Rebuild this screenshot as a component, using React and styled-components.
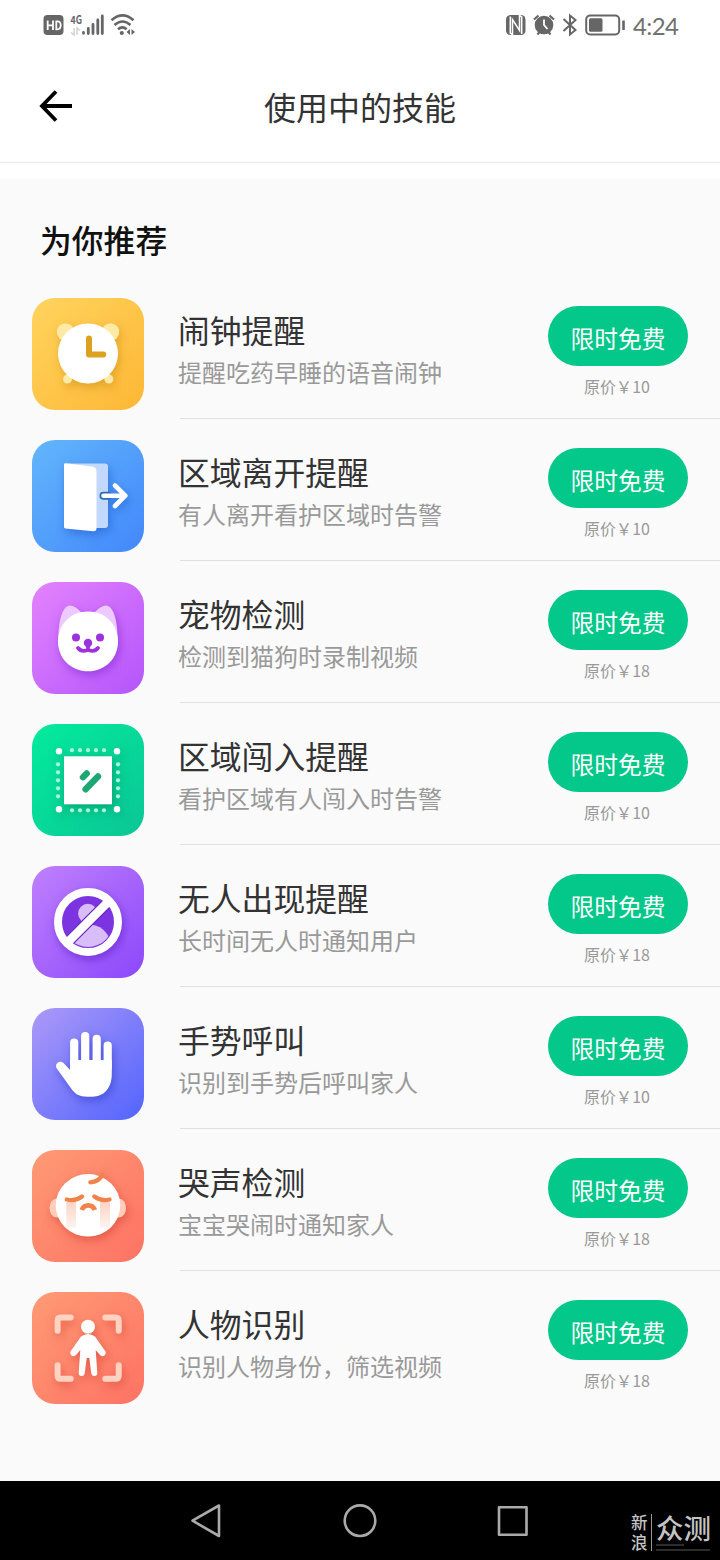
import React from "react";
import styled, { createGlobalStyle } from "styled-components";

const skills = [
  { icon: "clock", name: "闹钟提醒", text: "提醒吃药早睡的语音闹钟", price: 10, from: "#ffd45e", to: "#fdb735", shadow: "#c98a10" },
  { icon: "door", name: "区域离开提醒", text: "有人离开看护区域时告警", price: 10, from: "#63b6fc", to: "#4287fb", shadow: "#1c56c8" },
  { icon: "pet", name: "宠物检测", text: "检测到猫狗时录制视频", price: 18, from: "#e383fd", to: "#b455fc", shadow: "#7d22cc" },
  { icon: "area", name: "区域闯入提醒", text: "看护区域有人闯入时告警", price: 10, from: "#03eb9c", to: "#0bc696", shadow: "#047f5e" },
  { icon: "nobody", name: "无人出现提醒", text: "长时间无人时通知用户", price: 18, from: "#c080fd", to: "#8c48fb", shadow: "#5518c0" },
  { icon: "hand", name: "手势呼叫", text: "识别到手势后呼叫家人", price: 10, from: "#ac99f8", to: "#5264fd", shadow: "#2a36c4" },
  { icon: "baby", name: "哭声检测", text: "宝宝哭闹时通知家人", price: 18, from: "#fe9a74", to: "#fe7364", shadow: "#cf3d30" },
  { icon: "person", name: "人物识别", text: "识别人物身份，筛选视频", price: 18, from: "#fe9a74", to: "#fe7364", shadow: "#cf3d30" },
];

const ticks = [40, 48, 56, 64, 72];

const drawings = {
  clock: (
    <>
      <g fill="#ffe9a6">
        <circle cx="33.5" cy="34" r="8.7" />
        <circle cx="78.5" cy="34" r="8.7" />
        <circle cx="35.5" cy="81" r="4.5" />
        <circle cx="76.8" cy="81" r="4.5" />
      </g>
      <circle cx="56" cy="55.5" r="30" fill="#fff" />
      <path d="M57 40.5V56.5H71.2" stroke="#dba11f" strokeWidth="6" />
    </>
  ),
  door: (
    <>
      <rect x="33" y="23.5" width="43" height="64.5" rx="3" fill="#c3d8fd" />
      <path d="M32 24.5Q32 23 33.5 23.2L60 26.4Q64.5 27 64.5 31.5V88Q64.5 91.6 61 91.2L33.5 88.6Q32 88.4 32 87Z" fill="#fff" />
      <path d="M76 55.7H71.5" stroke="#2c69bd" strokeWidth="8" />
      <path d="M71.5 55.7H92M83 45.5L93.3 55.7L83 66" stroke="#fff" strokeWidth="4.6" />
    </>
  ),
  pet: (
    <>
      <path d="M26.5 58C26 38 31 23.5 38 23.5Q43 23.5 49 30L63 30Q69 23.5 74 23.5C81 23.5 86 38 85.5 58Z" fill="#ecc9ff" />
      <path d="M56 29.5C73.5 29.5 86 42.5 86 59.5C86 76.5 73 89.3 56 89.3S26 76.5 26 59.5C26 42.5 38.5 29.5 56 29.5Z" fill="#fff" />
      <g fill="#9b32dc">
        <circle cx="44" cy="55.5" r="4" />
        <circle cx="68" cy="55.5" r="4" />
        <circle cx="56" cy="61" r="4.2" />
      </g>
      <path d="M46 66Q49.5 70.5 56 67.8Q62.5 70.5 66 66M56 62V67.5" stroke="#9b32dc" strokeWidth="3.8" />
    </>
  ),
  area: (
    <>
      <rect x="32" y="32.3" width="48" height="48" fill="#fff" />
      <g fill="#fff">
        <circle cx="27" cy="27.3" r="3.2" />
        <circle cx="85" cy="27.3" r="3.2" />
        <circle cx="27" cy="85.3" r="3.2" />
        <circle cx="85" cy="85.3" r="3.2" />
      </g>
      <g fill="#a6f7d8">
        {ticks.map((t) => (
          <g key={t}>
            <circle cx={t} cy="26.2" r="2.1" />
            <circle cx={t} cy="86.3" r="2.1" />
            <circle cx="26" cy={t + 0.3} r="2.1" />
            <circle cx="86" cy={t + 0.3} r="2.1" />
          </g>
        ))}
      </g>
      <path d="M51 53.2L54.7 49.5M53.6 65.3L66 52.5" stroke="#1da873" strokeWidth="6.4" />
    </>
  ),
  nobody: (
    <>
      <clipPath id="ring">
        <circle cx="56" cy="56" r="25" />
      </clipPath>
      <circle cx="56" cy="56" r="27" fill="#7b34e0" />
      <g clipPath="url(#ring)">
        <circle cx="55.8" cy="47.5" r="9.7" fill="#d9bdf8" />
        <ellipse cx="56" cy="76" rx="21.5" ry="17.5" fill="#d9bdf8" />
        <path d="M34 78L78 34" stroke="#6a28c8" strokeWidth="11" />
      </g>
      <circle cx="56" cy="56" r="30" stroke="#fff" strokeWidth="8" />
      <path d="M36.5 75.5L75.5 36.5" stroke="#fff" strokeWidth="8.8" />
    </>
  ),
  hand: (
    <>
      <path d="M42.2 34.5V60M53.2 28V60M64.7 30.8V60M75.7 37.5V60" stroke="#fff" strokeWidth="8.2" />
      <path d="M38.1 52H79.8V66C79.8 80 72 88.7 60.5 88.7H55C47.5 88.7 43 86 39.5 81L24.8 60.5C22 56 27.5 51.5 31.5 55L38.1 62Z" fill="#fff" />
    </>
  ),
  baby: (
    <>
      <defs>
        <linearGradient id="tear" x1="0" y1="0" x2="0" y2="1">
          <stop offset="0" stopColor="#fbd3c4" />
          <stop offset="1" stopColor="#fbd3c4" stopOpacity="0.25" />
        </linearGradient>
      </defs>
      <ellipse cx="24.5" cy="58" rx="7" ry="9.5" fill="#ffcdb9" />
      <ellipse cx="87" cy="58" rx="7" ry="9.5" fill="#ffcdb9" />
      <ellipse cx="56" cy="55.3" rx="32.3" ry="31.3" fill="#fff" />
      <path d="M34.3 52H44V78H34.3ZM68 52H78V78H68Z" fill="url(#tear)" />
      <g stroke="#f0824a" strokeWidth="4.2">
        <path d="M70.5 24.5Q67 32 58.3 32.3M34.8 49.5Q43.5 51.5 50 46.5M62.3 46.5Q69 51.5 77.5 49.5" />
        <path d="M49.8 60Q51.5 55.3 56.3 55.3T62.8 60" strokeWidth="4.8" strokeLinecap="butt" />
      </g>
    </>
  ),
  person: (
    <>
      <path
        d="M25.6 38.7V28.6Q25.6 25.6 28.6 25.6H38.7M73.3 25.6H83.7Q86.7 25.6 86.7 28.6V38.7M86.7 73.3V83.7Q86.7 86.7 83.7 86.7H73.3M38.7 86.7H28.6Q25.6 86.7 25.6 83.7V73.3"
        stroke="#ffd3c1"
        strokeWidth="6"
      />
      <g fill="#fff">
        <circle cx="56" cy="34.8" r="7" />
        <path d="M49 44.5Q56 39.5 63 44.5L73.5 59.5Q74.5 62.8 71.5 64Q69.5 64.5 68 63L63.7 58L65.3 81Q65.3 84 62.5 84T59.3 81.5L57.3 66H54.7L52.7 81.5Q52.3 84 49.5 84T46.7 81L48.3 58L44 63Q42.5 64.5 40.5 64Q37.5 62.8 38.5 59.5Z" />
      </g>
    </>
  ),
};

const App = () => {
  return (
    <Screen>
      <GlobalStyle />
      <StatusBar>
        <svg width="100" height="50" viewBox="40 0 100 50" fill="none" stroke="#666">
          <rect x="43.5" y="15" width="20" height="20" rx="4" fill="#666" stroke="none" />
          <path d="M47.7 20.5V30M53 20.5V30M47.7 25.3H53M56.3 21.3V29.3H57.5Q60.7 29.3 60.7 25.3T57.5 21.3Z" stroke="#fff" strokeWidth="1.8" />
          <text x="70.5" y="23.5" fontSize="11" fontWeight="700" fill="#666" stroke="none" textLength="11.5" lengthAdjust="spacingAndGlyphs">
            4G
          </text>
          <path d="M74 28V35L71 32.5M77 35V28L80 30.5" stroke="#d0d0d0" strokeWidth="1.4" />
          <path d="M83.5 32.5V33.3M88.3 28.5V33.5M93 24.5V33.5M97.8 20V33.5M102.3 16V33.5" strokeWidth="2.8" strokeLinecap="round" />
          <path d="M111.5 20.2Q122.5 10.5 133.5 20.2M114.5 25Q122.5 18 130.5 25M118 29.3Q122.3 25.5 126.7 29.3" strokeWidth="2.6" />
          <circle cx="121.8" cy="33" r="2.1" fill="#666" stroke="none" />
          <path d="M130 29V35L126.5 32ZM131.5 35V29L135 32Z" fill="#666" stroke="none" />
        </svg>
        <StatusSide>
          <svg width="125" height="50" viewBox="503 0 125 50" fill="none" stroke="#666">
            <rect x="506" y="15" width="19.5" height="20" rx="4.5" fill="#666" stroke="none" />
            <path d="M510.3 16.5V33L512.5 34.5V19.5L519.5 30.5V15.5L521.7 17V34" stroke="#fff" strokeWidth="1.5" />
            <circle cx="544" cy="25" r="9.3" fill="#666" stroke="none" />
            <path d="M544 19.5V25L547.5 29" stroke="#fff" strokeWidth="1.8" />
            <path d="M534 19.5L538.5 15.5M554 19.5L549.5 15.5M537.5 34.5L540 31.5M550.5 34.5L548 31.5" strokeWidth="2.2" />
            <path d="M563.5 19L575.5 30L570 34.5V15.5L575.5 20L563.5 31" strokeWidth="2" />
            <rect x="586.2" y="15.5" width="33" height="19" rx="4" strokeWidth="2" />
            <rect x="589" y="18.3" width="13.5" height="13.5" rx="1.5" fill="#666" stroke="none" />
            <path d="M623.5 20.5V30" strokeWidth="2.6" />
          </svg>
          <Time>4:24</Time>
        </StatusSide>
      </StatusBar>

      <Header>
        <BackButton aria-label="返回">
          <svg width="34" height="32" viewBox="0 0 34 32" fill="none" stroke="#000" strokeWidth="3.8">
            <path d="M33 16H4M17 1.5L3 16L17 30.5" />
          </svg>
        </BackButton>
        <Title>使用中的技能</Title>
      </Header>

      <Content>
        <SectionTitle>为你推荐</SectionTitle>
        {skills.map((skill) => (
          <SkillRow key={skill.name}>
            <SkillIcon $from={skill.from} $to={skill.to} $shadow={skill.shadow}>
              <svg width="112" height="112" viewBox="0 0 112 112" fill="none" strokeLinecap="round" strokeLinejoin="round">
                {drawings[skill.icon]}
              </svg>
            </SkillIcon>
            <SkillBody>
              <SkillInfo>
                <SkillName>{skill.name}</SkillName>
                <SkillText>{skill.text}</SkillText>
              </SkillInfo>
              <Offer>
                <FreeButton>限时免费</FreeButton>
                <Price>原价￥{skill.price}</Price>
              </Offer>
            </SkillBody>
          </SkillRow>
        ))}
      </Content>

      <NavBar>
        <svg width="338" height="36" viewBox="191 1503 338 36" fill="none" stroke="#aaa" strokeWidth="2.6" strokeLinejoin="round">
          <path d="M219 1505.5V1536L192.5 1520.7Z" />
          <circle cx="360" cy="1520.7" r="15.3" />
          <rect x="499" y="1507.3" width="27.5" height="27.5" />
        </svg>
        <Watermark>
          <WatermarkSide>
            <span>新</span>
            <span>浪</span>
          </WatermarkSide>
          <WatermarkMain>
            <span>众测</span>
            <Line $width="28px" />
            <Line $width="54px" />
          </WatermarkMain>
        </Watermark>
      </NavBar>
    </Screen>
  );
};

const GlobalStyle = createGlobalStyle`
  * {
    box-sizing: border-box;
  }
  body {
    margin: 0;
    font-family: "Noto Sans CJK SC", "Noto Sans", sans-serif;
  }
  h1, h2, h3, p {
    margin: 0;
    font-weight: 400;
  }
  svg {
    display: block;
  }
`;

const Screen = styled.div`
  display: flex;
  flex-direction: column;
  width: 720px;
  height: 1560px;
  overflow: hidden;
  background: #fff;
`;

const StatusBar = styled.div`
  display: flex;
  justify-content: space-between;
  height: 50px;
  padding: 0 43px 0 40px;
`;

const StatusSide = styled.div`
  display: flex;
  align-items: center;
  gap: 5px;
`;

const Time = styled.span`
  width: 44px;
  padding-top: 2px;
  font-family: Lato, sans-serif;
  font-size: 24px;
  line-height: 48px;
  letter-spacing: -0.6px;
  white-space: nowrap;
  color: #707070;
`;

const Header = styled.header`
  display: grid;
  grid-template-columns: 80px 1fr 80px;
  align-items: center;
  height: 113px;
  border-bottom: 1px solid #e6e6e6;
`;

const BackButton = styled.button`
  padding: 0 0 0 39px;
  border: 0;
  background: none;
`;

const Title = styled.h1`
  font-size: 32px;
  line-height: 48px;
  text-align: center;
  color: #333;
`;

const Content = styled.main`
  flex: 1;
  margin-top: 15px;
  padding-top: 37px;
  background: #fafafa;
`;

const SectionTitle = styled.h2`
  height: 62px;
  padding-left: 40px;
  font-size: 31.8px;
  font-weight: 500;
  line-height: 48px;
  color: #111;
`;

const SkillRow = styled.div`
  display: flex;
  height: 142px;
  padding-left: 32px;
  &:last-child > div {
    border-color: transparent;
  }
`;

const SkillIcon = styled.span`
  flex: none;
  width: 112px;
  height: 112px;
  margin: 21px 36px 0 0;
  border-radius: 23px;
  background: linear-gradient(135deg, ${(props) => props.$from}, ${(props) => props.$to});
  svg {
    filter: drop-shadow(2px 4px 5px ${(props) => props.$shadow}88);
  }
`;

const SkillBody = styled.div`
  display: flex;
  flex: 1;
  justify-content: space-between;
  padding-right: 32px;
  border-bottom: 1px solid #e0e0e0;
`;

const SkillInfo = styled.div`
  padding-top: 30px;
  margin-left: -2px;
`;

const SkillName = styled.h3`
  margin-bottom: 1px;
  font-size: 31.8px;
  line-height: 44px;
  color: #333;
`;

const SkillText = styled.p`
  font-size: 24px;
  line-height: 40px;
  color: #999;
`;

const Offer = styled.div`
  display: flex;
  flex-direction: column;
  align-items: center;
  padding-top: 29px;
`;

const FreeButton = styled.button`
  width: 140px;
  height: 60px;
  padding: 2px 0 0;
  border: 0;
  border-radius: 30px;
  background: #04c78a;
  font-family: inherit;
  font-size: 23.8px;
  color: #fff;
`;

const Price = styled.p`
  margin: 8px 2px 0 0;
  font-size: 16px;
  line-height: 24px;
  color: #999;
`;

const NavBar = styled.nav`
  display: flex;
  justify-content: space-between;
  height: 79px;
  padding: 22px 10px 0 191px;
  background: #000;
`;

const Watermark = styled.div`
  display: flex;
  padding-top: 11px;
  font-weight: 500;
  color: #c4c4c4;
`;

const WatermarkSide = styled.div`
  display: flex;
  flex-direction: column;
  gap: 3px;
  width: 21px;
  height: 37px;
  border-right: 1px solid #999;
  font-size: 16.5px;
  line-height: 17px;
`;

const WatermarkMain = styled.div`
  display: flex;
  flex-direction: column;
  gap: 3px;
  width: 54px;
  margin-left: 4px;
  font-size: 27.5px;
  line-height: 27px;
  white-space: nowrap;
`;

const Line = styled.div`
  width: ${(props) => props.$width};
  height: 2px;
  background: #2c2c2c;
`;

export default App;
